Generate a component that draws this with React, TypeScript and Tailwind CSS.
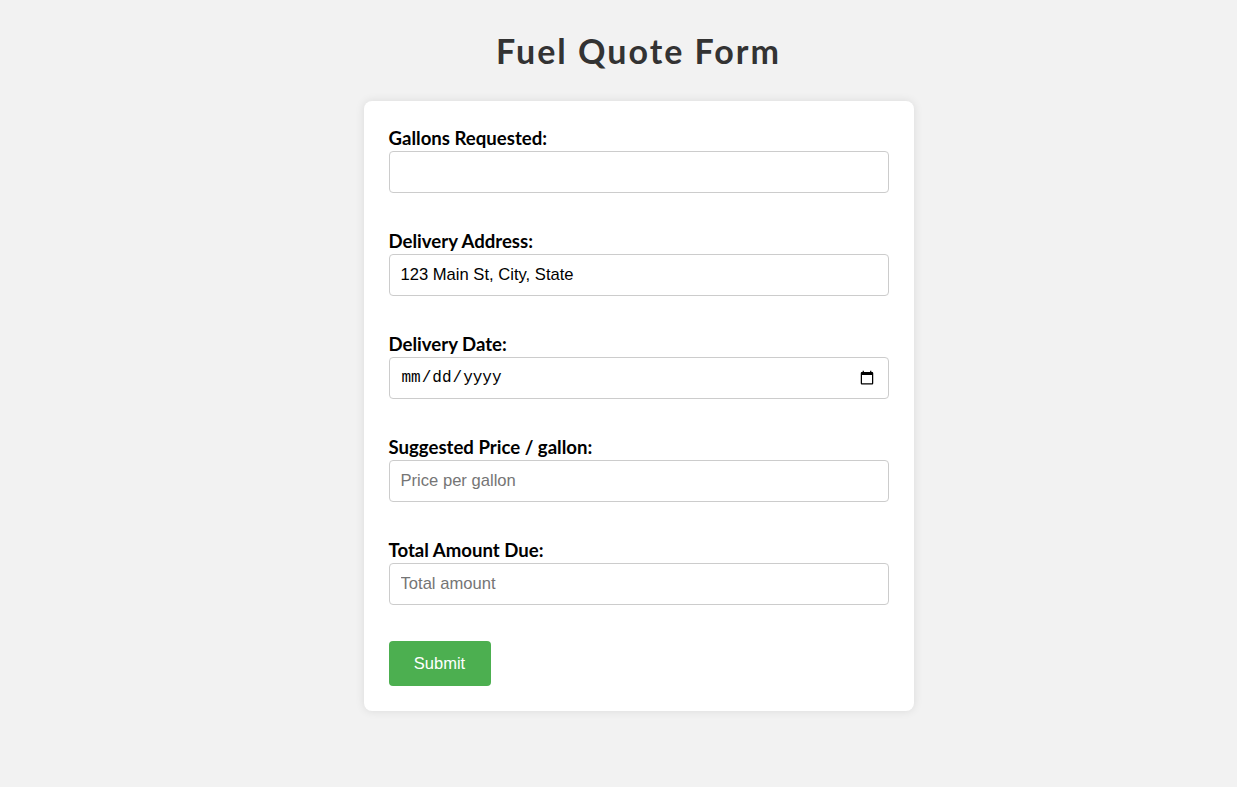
export default function App() {
  const fields = [
    { label: "Gallons Requested:", type: "number", value: "", placeholder: "" },
    { label: "Delivery Address:", type: "text", value: "123 Main St, City, State", placeholder: "" },
    { label: "Delivery Date:", type: "date", value: "", placeholder: "" },
    { label: "Suggested Price / gallon:", type: "text", value: "", placeholder: "Price per gallon" },
    { label: "Total Amount Due:", type: "text", value: "", placeholder: "Total amount" },
  ];

  return (
    <div className="min-h-[787px] bg-[#f2f2f2] pt-[30px] pl-[40px] font-['Lato',sans-serif]">
      <h1 className="text-center text-[34px] leading-[42px] font-bold tracking-[2px] text-[#333]">
        Fuel Quote Form
      </h1>
      <form
        className="mx-auto mt-[29px] w-[550px] rounded-lg bg-white px-[25px] pt-[25px] pb-[25px] shadow-[0_0_10px_rgba(0,0,0,0.1)]"
        onSubmit={(e) => e.preventDefault()}
      >
        {fields.map((f) => (
          <div key={f.label} className="mb-[36px]">
            <label className="block text-[18.6px] leading-[25px] font-bold text-black">{f.label}</label>
            <input
              type={f.type}
              defaultValue={f.value}
              placeholder={f.placeholder}
              className={`block h-[42px] w-full rounded border border-[#ccc] px-[11px] text-black placeholder:text-[#757575] outline-none ${
                f.type === "date"
                  ? "font-['Liberation_Mono',monospace] text-[16px]"
                  : "font-['Liberation_Sans',Arial,sans-serif] text-[16.6px]"
              }`}
            />
          </div>
        ))}
        <button
          type="submit"
          className="h-[45px] w-[102px] rounded bg-[#4caf50] font-['Liberation_Sans',Arial,sans-serif] text-[16.5px] text-white"
        >
          Submit
        </button>
      </form>
    </div>
  );
}
